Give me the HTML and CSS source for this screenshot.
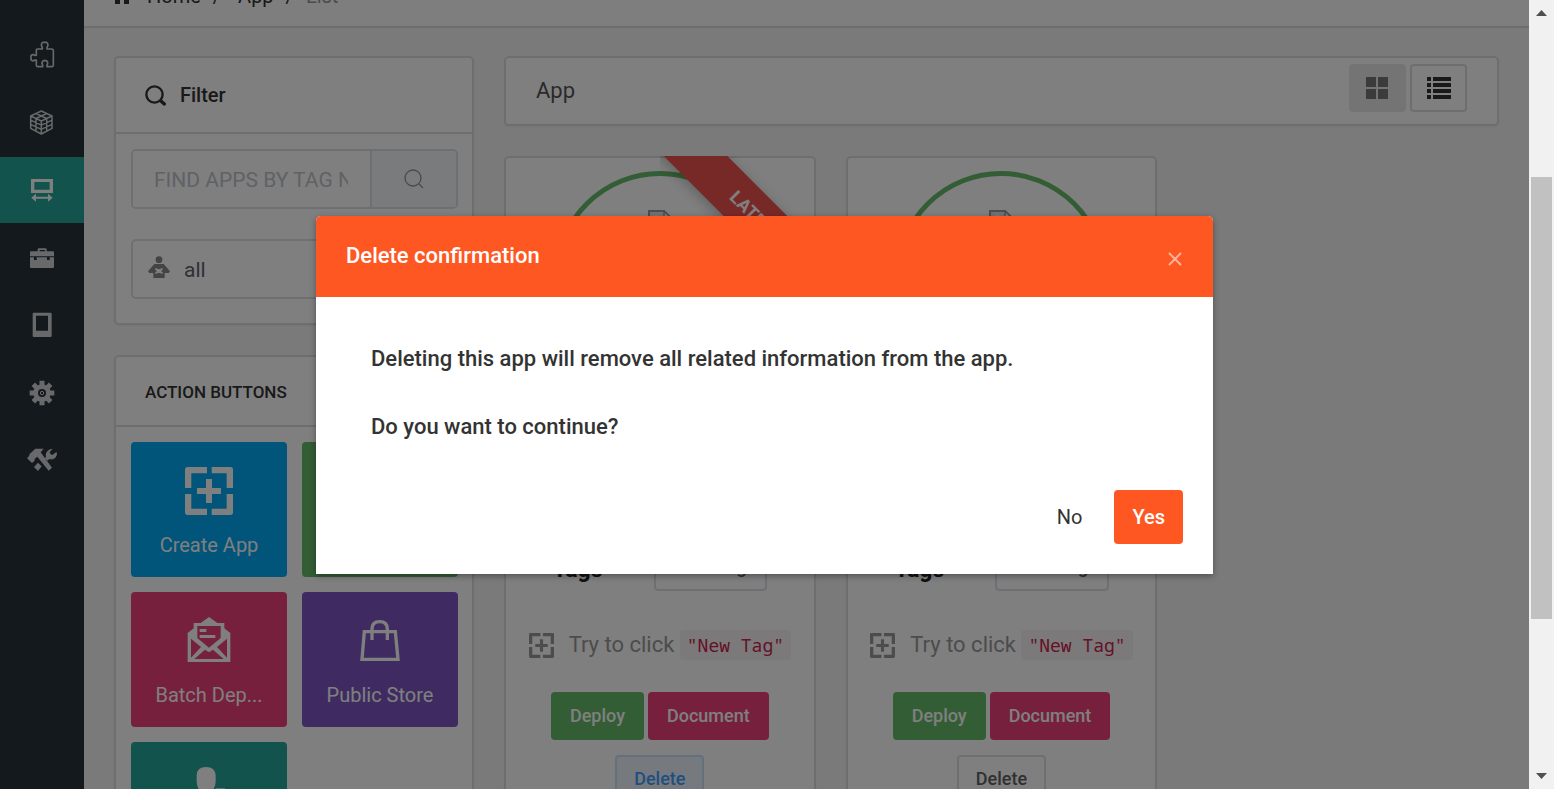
FILE: index.html
```html
<!DOCTYPE html>
<html lang="en">
<head>
<meta charset="utf-8">
<title>App list</title>
<link rel="stylesheet" href="styles.css">
</head>
<body>
<svg class="defs" aria-hidden="true">
  <symbol id="i-focus" viewBox="0 0 144 144">
    <path fill="currentColor" d="M0 8q0-8 8-8h58v19H19v44H0zM80 0h56q8 0 8 8v55h-19V19H80zM0 81h19v44h47v19H8q-8 0-8-8zM125 81h19v55q0 8-8 8H80v-19h45zM63 36h18v27h27v18H81v27H63V81H36V63h27z"/>
  </symbol>
  <symbol id="i-broken" viewBox="0 0 24 24">
    <path fill="#dce6f5" stroke="#9a9a9a" stroke-width="2" d="M1 1h15l6 6v16H1z"/>
    <path fill="#fff" stroke="#9a9a9a" stroke-width="1.5" d="M16 1v6h6z"/>
    <path fill="#fff" d="M5 8q3-6 7 0z"/>
  </symbol>
</svg>

<div class="window">
  <div class="page">
    <nav class="sidebar" aria-label="Main">
      <ul class="side-list">
        <li><a class="side-link" href="#" aria-label="Plugins"><svg viewBox="0 0 90 90" fill="none" stroke="currentColor" stroke-width="5" stroke-linejoin="round"><path d="M31 27h15v-4q-6-11 1-16h12q7 5 1 16v4h14q5 0 5 5v44q0 4-5 4H60v-4q5-10-2-14H49q-7 5-2 14v4H32q-4 0-4-4V60h-4q-7 5-12-1V47q5-6 12-1h4V31q0-4 3-4z"/></svg></a></li>
        <li><a class="side-link" href="#" aria-label="Packages"><svg viewBox="0 0 90 90" fill="none" stroke="currentColor" stroke-width="4.500" stroke-linejoin="round"><path d="M43 9l32 15v37L43 78 11 61V24zM11 24l32 15 32-15M43 39v39M27 16.500l32 15v38M59 16.500L27 31.500v38M11 36.500l32 15 32-15M11 49l32 15 32-15"/></svg></a></li>
        <li><a class="side-link active" href="#" aria-label="Apps"><svg viewBox="0 0 90 90" fill="currentColor"><path fill-rule="evenodd" d="M12 12h66v42H12zM22 21v23h46V21z"/><path d="M13 68l14-12v9h36v-9l14 12-14 12v-9H27v9z"/></svg></a></li>
        <li><a class="side-link" href="#" aria-label="Jobs"><svg viewBox="0 0 90 90" fill="currentColor"><path fill-rule="evenodd" d="M32 25v-5q0-4 4-4h19q4 0 4 4v5h19q3 0 3 3v12H9V28q0-3 3-3zM38 21v4h16v-4z"/><path d="M9 43h12v8h8v-8h31v8h8v-8h13v29q0 3-3 3H12q-3 0-3-3z"/></svg></a></li>
        <li><a class="side-link" href="#" aria-label="Devices"><svg viewBox="0 0 90 90" fill="currentColor"><path fill-rule="evenodd" d="M20 8h50q4 0 4 4v65q0 4-4 4H20q-3 0-3-4V12q0-4 3-4zM27 17v45h36V17z"/></svg></a></li>
        <li><a class="side-link" href="#" aria-label="Settings"><svg viewBox="0 0 90 90" fill="none" stroke="currentColor"><circle cx="45" cy="45" r="19" stroke-width="14"/><path stroke-width="15" d="M45 8v14M45 68v14M8 45h14M68 45h14M19 19l10 10M61 61l10 10M71 19L61 29M29 61L19 71"/><circle cx="45" cy="45" r="5" stroke-width="3"/></svg></a></li>
        <li><a class="side-link" href="#" aria-label="Tools"><svg viewBox="0 0 90 90" fill="currentColor"><path d="M25 11h25l-9 11 34 46-10 9-34-42-8 6v6l-8 7L0 40l7-8v-4zM57 37q-3-12 5-20 7-6 15-6l-9 11q2 8 8 8l12-9q5 8-3 17-8 8-18 4l-5 5-9-8zM33 53l11 11-11 14-12-12z"/></svg></a></li>
      </ul>
    </nav>

    <div class="main">
      <nav class="breadcrumb" aria-label="Breadcrumb">
        <svg class="home" viewBox="0 0 16 16" fill="currentColor"><path d="M8 0L0 8h1v8h5v-5h4v5h5V8h1z"/></svg>
        <a href="#">Home</a><span>/</span><a class="crumb-app" href="#">App</a><span>/</span><span class="current">List</span>
      </nav>

      <div class="content">
        <aside class="left">
          <section class="panel">
            <h2 class="panel-head filter-head">
              <svg viewBox="0 0 62 62" fill="none" stroke="currentColor" stroke-linecap="round"><circle cx="28" cy="28" r="24" stroke-width="7"/><path stroke-width="10" d="M48 48l9 8"/></svg>
              Filter
            </h2>
            <div class="filter-body">
              <div class="search">
                <input type="text" placeholder="FIND APPS BY TAG NAME" aria-label="Find apps by tag name">
                <button type="button" aria-label="Search"><svg viewBox="0 0 20 20" fill="none" stroke="currentColor" stroke-width="1.3"><circle cx="9" cy="9" r="8"/><path d="M15 15l4 4"/></svg></button>
              </div>
              <div class="select-wrap">
                <svg viewBox="0 0 66 66" fill="currentColor"><circle cx="33" cy="11" r="10"/><path fill-rule="evenodd" d="M19 24h28l19 22-4 5H50v15H16V51H4l-4-5zM22 36v6l5 3-5 4v5l11-4 11 4v-5l-5-4 5-3v-6l-11 4z"/></svg>
                <select aria-label="Category"><option>all</option></select>
              </div>
            </div>
          </section>

          <section class="panel">
            <h2 class="panel-head action-head">ACTION BUTTONS</h2>
            <div class="tiles">
              <button class="tile blue" type="button"><svg viewBox="0 0 144 144"><use href="#i-focus"/></svg><span>Create App</span></button>
              <button class="tile green" type="button" aria-label="Deploy"></button>
              <button class="tile pink" type="button"><svg viewBox="0 0 144 144" fill="currentColor"><path fill-rule="evenodd" d="M8 135V48l18-14V18h21L72 0l25 18h21v16l18 14v87zM37 27v36l35 29 35-29V27zM18 65v57l30-32zM126 65v57L96 90zM28 126h88L84 98l-12 8-12-8z"/><path d="M44 36h20v9H44zM44 54h47v9H44z"/></svg><span>Batch Dep...</span></button>
              <button class="tile purple" type="button"><svg viewBox="0 0 144 144" fill="none" stroke="currentColor" stroke-width="10"><path d="M25 44h93l8 83H18zM48 69V36q0-22 23-22t23 22v33"/></svg><span>Public Store</span></button>
              <button class="tile teal" type="button"><svg viewBox="0 0 144 144" fill="currentColor"><path d="M35 25Q36 0 63 0t29 25v18q0 20-14 32v12l40 20v30H8v-30l40-20V75Q35 63 35 43z"/><path d="M92 64h28v25H92z"/></svg><span>Owner</span></button>
            </div>
          </section>
        </aside>

        <main class="right">
          <header class="panel toolbar">
            <h1>App</h1>
            <div class="views">
              <button class="view on" type="button" aria-label="Grid view"><svg viewBox="0 0 24 24" fill="currentColor"><path d="M0 1h10v10H0zM12 1h10v10H12zM0 13h10v10H0zM12 13h10v10H12z"/></svg></button>
              <button class="view" type="button" aria-label="List view"><svg viewBox="0 0 24 24" fill="currentColor"><path d="M0 1h4v4H0zM6 1h18v4H6zM0 7h4v4H0zM6 7h18v4H6zM0 13h4v4H0zM6 13h18v4H6zM0 19h4v4H0zM6 19h18v4H6z"/></svg></button>
            </div>
          </header>

          <div class="cards">
            <article class="panel card">
              <div class="ribbon-box"><span class="ribbon">LATEST</span></div>
              <div class="photo"><svg><use href="#i-broken"/></svg></div>
              <div class="tags"><strong>Tags</strong><button class="btn plain new-tag" type="button">New Tag</button></div>
              <p class="hint"><svg><use href="#i-focus"/></svg><span>Try to click <code>"New Tag"</code></span></p>
              <div class="buttons">
                <button class="btn green" type="button">Deploy</button>
                <button class="btn pink" type="button">Document</button>
                <button class="btn plain focus" type="button">Delete</button>
              </div>
            </article>
            <article class="panel card">
              <div class="photo"><svg><use href="#i-broken"/></svg></div>
              <div class="tags"><strong>Tags</strong><button class="btn plain new-tag" type="button">New Tag</button></div>
              <p class="hint"><svg><use href="#i-focus"/></svg><span>Try to click <code>"New Tag"</code></span></p>
              <div class="buttons">
                <button class="btn green" type="button">Deploy</button>
                <button class="btn pink" type="button">Document</button>
                <button class="btn plain" type="button">Delete</button>
              </div>
            </article>
          </div>
        </main>
      </div>
    </div>

    <div class="overlay">
      <div class="modal" role="dialog" aria-modal="true" aria-labelledby="dlg-title">
        <header class="modal-head">
          <h2 id="dlg-title">Delete confirmation</h2>
          <button class="close" type="button" aria-label="Close"><svg viewBox="0 0 14 14" stroke="currentColor" stroke-width="2"><path d="M1 1l12 12M13 1L1 13"/></svg></button>
        </header>
        <div class="modal-body">
          <p>Deleting this app will remove all related information from the app.</p>
          <p>Do you want to continue?</p>
        </div>
        <footer class="modal-foot">
          <button class="no" type="button">No</button>
          <button class="yes" type="button">Yes</button>
        </footer>
      </div>
    </div>
  </div>

  <div class="scrollbar" aria-hidden="true">
    <svg viewBox="0 0 11 6"><path d="M0 6L5.500 0 11 6z"/></svg>
    <div class="track"><div class="thumb"></div></div>
    <svg viewBox="0 0 11 6"><path d="M0 0h11L5.500 6z"/></svg>
  </div>
</div>
</body>
</html>
```

FILE: styles.css
```css
* { box-sizing: border-box; }

body {
  margin: 0;
  font-family: Roboto, "Liberation Sans", sans-serif;
  font-size: 20px;
  line-height: 30px;
  color: #333;
}

h1, h2, p, ul { margin: 0; padding: 0; font-weight: 400; }
ul { list-style: none; }
a { color: inherit; text-decoration: none; }
button, input, select { font: inherit; color: inherit; margin: 0; padding: 0; }
button { border: 0; border-radius: 4px; cursor: pointer; }
svg { display: block; flex: none; }

.defs { position: absolute; width: 0; height: 0; }

.window { display: flex; height: 100vh; overflow: hidden; }

.page {
  position: relative;
  display: flex;
  flex: 1;
  min-width: 0;
  overflow: hidden;
  background: #f5f5f5;
}

/* Sidebar */
.sidebar { flex: none; width: 84px; padding-top: 22px; background: #263238; color: #d0d3d5; }
.side-list { display: flex; flex-direction: column; justify-content: space-between; height: 471px; }
.side-link { display: flex; align-items: center; justify-content: center; height: 66px; }
.side-link svg { width: 30px; height: 30px; }
.side-link.active { background: #26a69a; color: #fff; }

/* Main column */
.main { flex: 1; min-width: 0; }

.breadcrumb {
  display: flex;
  align-items: center;
  height: 62px;
  margin-top: -34px;
  padding: 0 30px;
  gap: 12px;
  border-bottom: 2px solid #ddd;
  background: #fcfcfc;
}
.home { width: 16px; height: 16px; margin-right: 5px; }
.crumb-app { margin-left: 5px; }
.current { color: #999; }

.content { display: flex; align-items: flex-start; gap: 30px; padding: 28px 30px; }
.left { display: flex; flex-direction: column; gap: 30px; flex: none; width: 360px; }
.right { flex: 1; min-width: 0; }

.panel {
  border: 2px solid #ddd;
  border-radius: 5px;
  background: #fff;
  box-shadow: 0 1px 2px rgba(0, 0, 0, .05);
}

.panel-head { display: flex; align-items: center; padding: 0 29px; border-bottom: 2px solid #ddd; font-weight: 500; }
.filter-head { height: 76px; gap: 14px; font-size: 20px; }
.filter-head svg { width: 21px; height: 21px; }
.action-head { height: 70px; padding-top: 2px; font-size: 17px; }

.filter-body { display: flex; flex-direction: column; gap: 30px; padding: 15px 14px 24px 15px; }

.search { display: flex; height: 60px; border: 2px solid #dcdfe6; border-radius: 5px; overflow: hidden; }
.search input { flex: 1; min-width: 0; padding: 2px 22px 0 21px; border: 0; background: #fff; font-size: 21px; }
.search input::placeholder { color: #c0c4cc; opacity: 1; }
.search button {
  display: flex;
  align-items: center;
  justify-content: center;
  width: 86px;
  border-left: 2px solid #dcdfe6;
  border-radius: 0;
  background: #f5f7fa;
  color: #909399;
}
.search button svg { width: 20px; height: 20px; }

.select-wrap { position: relative; }
.select-wrap svg { position: absolute; left: 17px; top: 17px; width: 22px; height: 22px; color: #888; }
.select-wrap select {
  appearance: none;
  display: block;
  width: 100%;
  height: 60px;
  padding: 2px 52px 0 51px;
  border: 2px solid #dcdfe6;
  border-radius: 5px;
  background: #fff;
  color: #606266;
  font-size: 21px;
}

.tiles { display: grid; grid-template-columns: 1fr 1fr; gap: 15px; padding: 15px 14px 15px 15px; }
.tile {
  display: flex;
  flex-direction: column;
  align-items: center;
  gap: 15px;
  height: 135px;
  padding: 25px 0 0;
  color: #fff;
}
.tile svg { width: 48px; height: 48px; }

.blue { background: #03a9f4; }
.green { background: #66bb6a; }
.pink { background: #ec407a; }
.purple { background: #7e57c2; }
.teal { background: #26a69a; }

/* Toolbar */
.toolbar { display: flex; align-items: flex-start; justify-content: space-between; height: 70px; padding: 6px 30px; }
.toolbar h1 { font-size: 22px; line-height: 54px; color: #555; }
.views { display: flex; gap: 4px; }
.view {
  display: flex;
  align-items: center;
  justify-content: center;
  width: 57px;
  height: 48px;
  border: 2px solid #ddd;
  background: #fff;
}
.view svg { width: 24px; height: 24px; }
.view.on { border-color: #e8e8e8; background: #e8e8e8; color: #777; }

/* Cards */
.cards { display: grid; grid-template-columns: repeat(3, 1fr); gap: 30px; margin-top: 30px; }
.card { position: relative; display: flex; flex-direction: column; align-items: center; padding: 13px 13px 20px; }
.photo {
  display: flex;
  justify-content: center;
  width: 212px;
  height: 212px;
  margin-bottom: 160px;
  padding-top: 34px;
  border: 5px solid #66bb6a;
  border-radius: 50%;
}
.photo svg { width: 24px; height: 24px; }

.ribbon-box { position: absolute; top: -2px; right: -2px; width: 156px; height: 156px; overflow: hidden; }
.ribbon {
  position: absolute;
  left: -54px;
  top: 38px;
  width: 300px;
  line-height: 45px;
  text-align: center;
  font-size: 18px;
  font-weight: 700;
  color: #fff;
  background: #ef5350;
  box-shadow: 0 3px 14px rgba(0, 0, 0, .25);
  transform: rotate(45deg);
}

.tags { display: flex; align-items: center; gap: 51px; }
.tags strong { font-size: 23px; font-weight: 700; color: #222; padding-top: 6px; }

.btn { height: 48px; padding: 0 19px; font-size: 18px; font-weight: 500; color: #fff; }
.btn.plain { padding: 0 17px; border: 2px solid #dcdfe6; background: #fff; color: #606266; }
.btn.new-tag { padding: 0 18px; font-size: 19px; }
.btn.focus { border-color: #c6e2ff; background: #ecf5ff; color: #409eff; }

.hint { display: flex; align-items: center; gap: 15px; margin-top: 38px; font-size: 22px; line-height: 32px; color: #999; white-space: nowrap; }
.hint svg { width: 25px; height: 25px; }
.hint code {
  padding: 3px 7px;
  border-radius: 4px;
  background: #f9f2f4;
  color: #c7254e;
  font-family: "Noto Sans Mono", "DejaVu Sans Mono", monospace;
  font-size: 18px;
}

.buttons { display: flex; flex-wrap: wrap; justify-content: center; gap: 15px 4px; margin-top: 31px; }

/* Dialog */
.overlay {
  position: absolute;
  inset: 0;
  display: flex;
  align-items: flex-start;
  justify-content: center;
  padding: 216px 30px 0;
  background: rgba(0, 0, 0, .5);
}
.modal {
  width: 100%;
  max-width: 897px;
  border-radius: 5px 5px 0 0;
  background: #fff;
  box-shadow: 0 2px 6px rgba(0, 0, 0, .35);
}
.modal-head {
  display: flex;
  align-items: center;
  justify-content: space-between;
  height: 81px;
  padding: 0 30px 2px;
  border-radius: 5px 5px 0 0;
  background: #ff5722;
  color: #fff;
}
.modal-head h2 { font-size: 22px; font-weight: 500; }
.close { display: flex; padding: 6px 1px 0; background: none; color: #ffb39c; }
.close svg { width: 14px; height: 14px; }
.modal-body { display: flex; flex-direction: column; gap: 38px; padding: 47px 55px 48px; font-size: 22px; }
.modal-body p { font-weight: 500; }
.modal-foot { display: flex; justify-content: flex-end; gap: 14px; padding: 0 30px 30px; }
.modal-foot button { height: 54px; padding: 0 18px; }
.no { background: none; }
.yes { background: #ff5722; color: #fff; font-weight: 500; }

/* Scrollbar */
.scrollbar { display: flex; flex-direction: column; align-items: center; flex: none; width: 25px; padding: 10px 0; background: #f1f1f1; }
.scrollbar svg { width: 11px; height: 6px; fill: #505050; }
.track { flex: 1; align-self: stretch; display: flex; flex-direction: column; padding: 161px 2px 154px; }
.thumb { flex: 1; background: #c1c1c1; }
```
